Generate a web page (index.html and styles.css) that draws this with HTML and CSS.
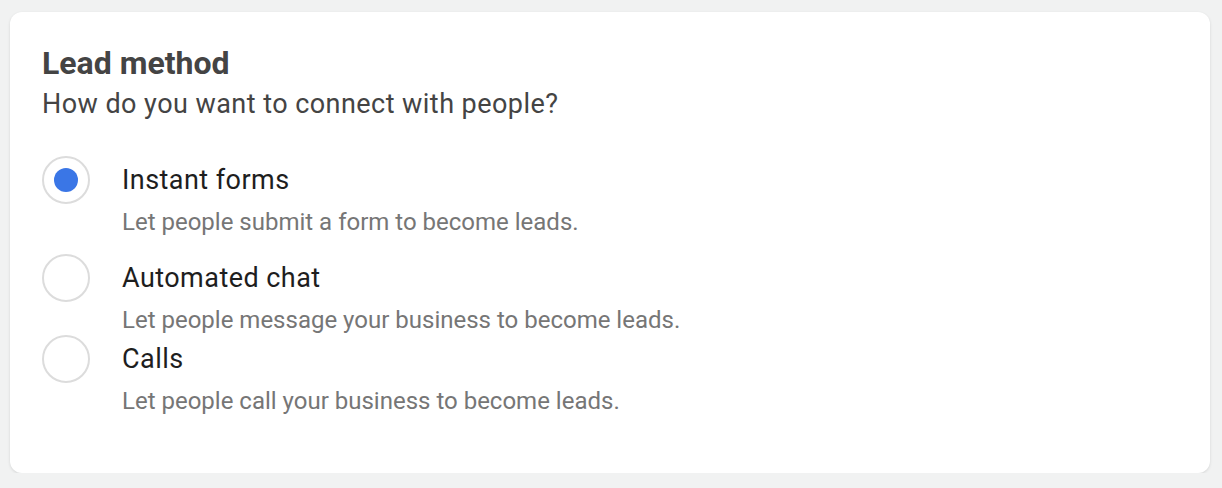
FILE: index.html
```html
<!DOCTYPE html>
<html>
<head>
<meta charset="utf-8">
<link rel="stylesheet" href="styles.css">
</head>
<body>
<div class="card">
  <h2 class="title">Lead method</h2>
  <p class="subtitle">How do you want to connect with people?</p>
  <div class="options">
    <div class="option first">
      <div class="radio checked"><span class="dot"></span></div>
      <div class="text">
        <div class="opt-title">Instant forms</div>
        <div class="opt-desc">Let people submit a form to become leads.</div>
      </div>
    </div>
    <div class="option">
      <div class="radio"></div>
      <div class="text">
        <div class="opt-title">Automated chat</div>
        <div class="opt-desc">Let people message your business to become leads.</div>
      </div>
    </div>
    <div class="option">
      <div class="radio"></div>
      <div class="text">
        <div class="opt-title">Calls</div>
        <div class="opt-desc">Let people call your business to become leads.</div>
      </div>
    </div>
  </div>
</div>
</body>
</html>
```
FILE: styles.css
```css
html, body {
  margin: 0;
  padding: 0;
  background: #f1f2f2;
  font-family: Roboto, "Liberation Sans", sans-serif;
}
body {
  padding: 12px 12px 0 10px;
}
.card {
  background: #fff;
  border-radius: 12px;
  box-shadow: 0 1px 3px rgba(0,0,0,0.12);
  padding: 32px 32px 0 32px;
  height: 461px;
  box-sizing: border-box;
}
.title {
  margin: 0;
  font-size: 32px;
  font-weight: 700;
  color: #444;
  line-height: 38px;
}
.subtitle {
  margin: 4px 0 0 0;
  font-size: 27px;
  letter-spacing: 0.45px;
  color: #444;
  line-height: 36px;
}
.options {
  margin-top: 34px;
}
.option {
  display: flex;
  gap: 32px;
}
.radio {
  width: 48px;
  height: 48px;
  box-sizing: border-box;
  border: 2px solid #dcdcdc;
  border-radius: 50%;
  flex-shrink: 0;
  display: flex;
  align-items: center;
  justify-content: center;
}
.dot {
  width: 24px;
  height: 24px;
  border-radius: 50%;
  background: #3a76e6;
}
.opt-title {
  font-size: 27px;
  letter-spacing: 0.45px;
  line-height: 48px;
  color: #1e1e1e;
}
.opt-desc {
  margin-top: 3px;
  font-size: 24px;
  line-height: 30px;
  color: #767676;
}
.option.first {
  margin-bottom: 17px;
}
```
